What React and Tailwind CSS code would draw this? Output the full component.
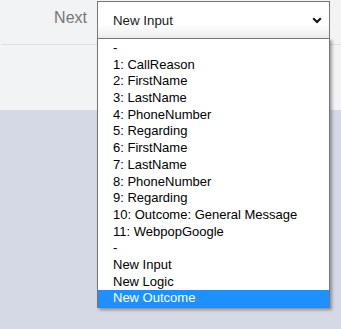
import React from "react";

const items = [
  "-",
  "1: CallReason",
  "2: FirstName",
  "3: LastName",
  "4: PhoneNumber",
  "5: Regarding",
  "6: FirstName",
  "7: LastName",
  "8: PhoneNumber",
  "9: Regarding",
  "10: Outcome: General Message",
  "11: WebpopGoogle",
  "-",
  "New Input",
  "New Logic",
  "New Outcome",
];

export default function App() {
  return (
    <div
      className="relative w-[341px] h-[329px] overflow-hidden bg-[#d5d9e5]"
      style={{ fontFamily: '"Liberation Sans", Arial, sans-serif' }}
    >
      <div className="h-[110px] bg-[#f1f3f5]">
        <div className="ml-[2px] h-[45px] border-b border-[#dcdfe2] flex items-start">
          <div className="w-[85px] pt-[9px] text-right text-[16px] leading-[18px] text-[#777777]">
            Next
          </div>
          <div className="ml-[10px] mt-[1px] w-[233px] h-[38px] border border-[#767676] bg-gradient-to-b from-white from-60% to-[#ededed] flex items-center pl-[15px] pr-[5px]">
            <span className="flex-1 text-[13.3px] leading-[16px] text-[#1a1a1a] pt-[1px]">
              New Input
            </span>
            <svg width="10" height="7" viewBox="0 0 10 7" className="mr-[2px] mt-[1px]">
              <polyline
                points="1.2,1.2 5,5 8.8,1.2"
                fill="none"
                stroke="#111"
                strokeWidth="2"
              />
            </svg>
          </div>
        </div>
      </div>

      <div className="absolute left-[97px] top-[38px] w-[233px] border border-[#767676] bg-white shadow-[2px_2px_3px_rgba(0,0,0,0.35)] pt-[1px]">
        {items.map((t, i) => {
          const sel = i === items.length - 1;
          return (
            <div
              key={i}
              className={
                "h-[16.7px] leading-[16.7px] pl-[15px] text-[13px] whitespace-nowrap " +
                (sel ? "bg-[#1e90ff] text-white" : "text-black")
              }
            >
              {t}
            </div>
          );
        })}
      </div>
    </div>
  );
}
